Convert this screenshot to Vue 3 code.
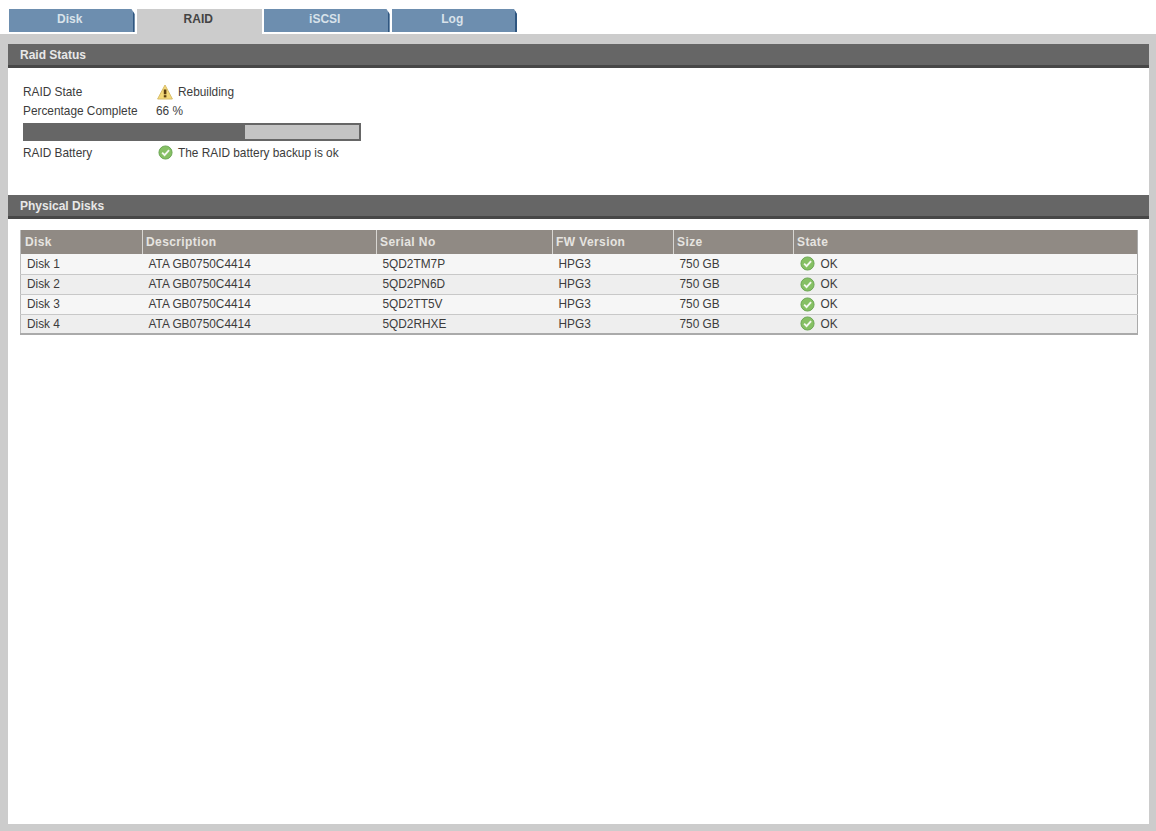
<script setup>
const tabs = [
  { name: 'Disk', active: false },
  { name: 'RAID', active: true },
  { name: 'iSCSI', active: false },
  { name: 'Log', active: false }
]

const columns = ['Disk', 'Description', 'Serial No', 'FW Version', 'Size', 'State']

const disks = [
  { name: 'Disk 1', description: 'ATA GB0750C4414', serial: '5QD2TM7P', fw: 'HPG3', size: '750 GB', state: 'OK' },
  { name: 'Disk 2', description: 'ATA GB0750C4414', serial: '5QD2PN6D', fw: 'HPG3', size: '750 GB', state: 'OK' },
  { name: 'Disk 3', description: 'ATA GB0750C4414', serial: '5QD2TT5V', fw: 'HPG3', size: '750 GB', state: 'OK' },
  { name: 'Disk 4', description: 'ATA GB0750C4414', serial: '5QD2RHXE', fw: 'HPG3', size: '750 GB', state: 'OK' }
]

const percent = 66
</script>

<template>
  <div class="page">
    <div class="tabs">
      <div v-for="tab in tabs" :key="tab.name" class="tab" :class="{ active: tab.active }">{{ tab.name }}</div>
    </div>

    <div class="frame">
      <div class="panel">
        <div class="section-title">Raid Status</div>
        <div class="status">
          <div class="status-row">
            <span class="label">RAID State</span>
            <span class="value">
              <svg class="icon warn" viewBox="0 0 16 16">
                <path d="M8 1 L15.4 15 H0.6 Z" fill="#f4d978" stroke="#d8bd6a" stroke-width="1" stroke-linejoin="round" />
                <rect x="6.8" y="5.5" width="2.6" height="4.8" fill="#5a3d10" />
                <rect x="6.8" y="11.2" width="2.6" height="2.2" fill="#5a3d10" />
              </svg>
              Rebuilding
            </span>
          </div>
          <div class="status-row">
            <span class="label">Percentage Complete</span>
            <span class="value pct">{{ percent }} %</span>
          </div>
          <div class="progress">
            <div class="progress-fill" :style="{ width: percent + '%' }"></div>
          </div>
          <div class="status-row">
            <span class="label">RAID Battery</span>
            <span class="value">
              <svg class="icon" viewBox="0 0 16 16">
                <circle cx="8" cy="8" r="7" fill="#86c064" stroke="#6aa552" stroke-width="1" />
                <path d="M4.4 8.2 L7 10.8 L11.8 5.4" fill="none" stroke="#f4f8f0" stroke-width="2" />
              </svg>
              The RAID battery backup is ok
            </span>
          </div>
        </div>

        <div class="section-title">Physical Disks</div>
        <div class="table-wrap">
          <table class="disk-table">
            <colgroup>
              <col class="c-disk" />
              <col class="c-desc" />
              <col class="c-serial" />
              <col class="c-fw" />
              <col class="c-size" />
              <col />
            </colgroup>
            <thead>
              <tr>
                <th v-for="col in columns" :key="col">{{ col }}</th>
              </tr>
            </thead>
            <tbody>
              <tr v-for="disk in disks" :key="disk.name">
                <td>{{ disk.name }}</td>
                <td>{{ disk.description }}</td>
                <td>{{ disk.serial }}</td>
                <td>{{ disk.fw }}</td>
                <td>{{ disk.size }}</td>
                <td>
                  <span class="value state">
                    <svg class="icon" viewBox="0 0 16 16">
                      <circle cx="8" cy="8" r="7" fill="#86c064" stroke="#6aa552" stroke-width="1" />
                      <path d="M4.4 8.2 L7 10.8 L11.8 5.4" fill="none" stroke="#f4f8f0" stroke-width="2" />
                    </svg>
                    {{ disk.state }}
                  </span>
                </td>
              </tr>
            </tbody>
          </table>
        </div>
      </div>
    </div>
  </div>
</template>

<style>
html, body {
  margin: 0;
  background: #fff;
}
</style>

<style scoped>
.page {
  height: 831px;
  display: flex;
  flex-direction: column;
  overflow: hidden;
  font-family: "Liberation Sans", Arial, sans-serif;
  font-size: 11.85px;
  color: #3c3c3c;
  background: #fff;
}

.tabs {
  display: flex;
  align-items: flex-start;
  gap: 2px;
  height: 34px;
  box-sizing: border-box;
  padding: 9px 0 0 9px;
}

.tab {
  width: 125.5px;
  height: 23px;
  line-height: 20px;
  box-sizing: border-box;
  padding-right: 2px;
  text-align: center;
  font-weight: bold;
  font-size: 12px;
  color: #d8e2ea;
  background: #6d8eaf;
  border-right: 2px solid #2f5680;
  clip-path: polygon(0 0, calc(100% - 3px) 0, 100% 5px, 100% 100%, 0 100%);
}

.tab.active {
  height: 25px;
  color: #444;
  background: #cccccc;
  border-right: none;
  clip-path: none;
}

.frame {
  flex: 1;
  display: flex;
  background: #cccccc;
  padding: 10px 7px 7px 8px;
  min-height: 0;
}

.panel {
  flex: 1;
  background: #fff;
}

.section-title {
  height: 24px;
  line-height: 22px;
  box-sizing: border-box;
  padding-left: 12px;
  font-weight: bold;
  font-size: 12px;
  color: #e8e8e8;
  background: #666666;
  border-bottom: 3px solid #474747;
}

.status {
  height: 127px;
  box-sizing: border-box;
  padding: 14px 0 0 15px;
}

.status-row {
  display: flex;
  align-items: center;
  height: 19px;
}

.label {
  width: 132px;
  flex-shrink: 0;
}

.value {
  display: inline-flex;
  align-items: center;
  gap: 5px;
}

.value.pct {
  padding-left: 1px;
}

.status-row:first-child .value,
.status-row:last-child .value {
  padding-left: 3px;
}

.icon {
  width: 15px;
  height: 15px;
  flex-shrink: 0;
}

.icon.warn {
  width: 16px;
  height: 16px;
  margin-left: -1px;
}

.progress {
  width: 338px;
  height: 18px;
  box-sizing: border-box;
  margin: 3px 0 2px;
  background: #c4c4c4;
  border: 2px solid #666;
}

.progress-fill {
  height: 100%;
  background: #666;
}

.table-wrap {
  padding: 11px 11px 0 12px;
}

.disk-table {
  width: 100%;
  border-collapse: collapse;
  table-layout: fixed;
  border-bottom: 2px solid #aaaaaa;
  border-left: 1px solid #bdbdbd;
  border-right: 1px solid #aaaaaa;
}

.c-disk { width: 122px; }
.c-desc { width: 234px; }
.c-serial { width: 176px; }
.c-fw { width: 121px; }
.c-size { width: 120px; }

.disk-table th {
  height: 24px;
  padding: 0 0 1px 3px;
  box-sizing: border-box;
  text-align: left;
  font-weight: bold;
  font-size: 12px;
  letter-spacing: 0.4px;
  color: #e6e4e0;
  background: #908a84;
  border-left: 1px solid #d8d6d2;
}

.disk-table th:first-child {
  border-left: none;
  padding-left: 4px;
}

.disk-table td {
  height: 20px;
  box-sizing: border-box;
  padding: 0 0 0 6px;
  background: #f6f6f6;
  border-bottom: 1px solid #c8c8c8;
}

.disk-table tbody tr:nth-child(even) td {
  background: #eeeeee;
}

.disk-table tbody tr:last-child td {
  border-bottom: none;
}

.value.state {
  gap: 6px;
  vertical-align: middle;
}
</style>
